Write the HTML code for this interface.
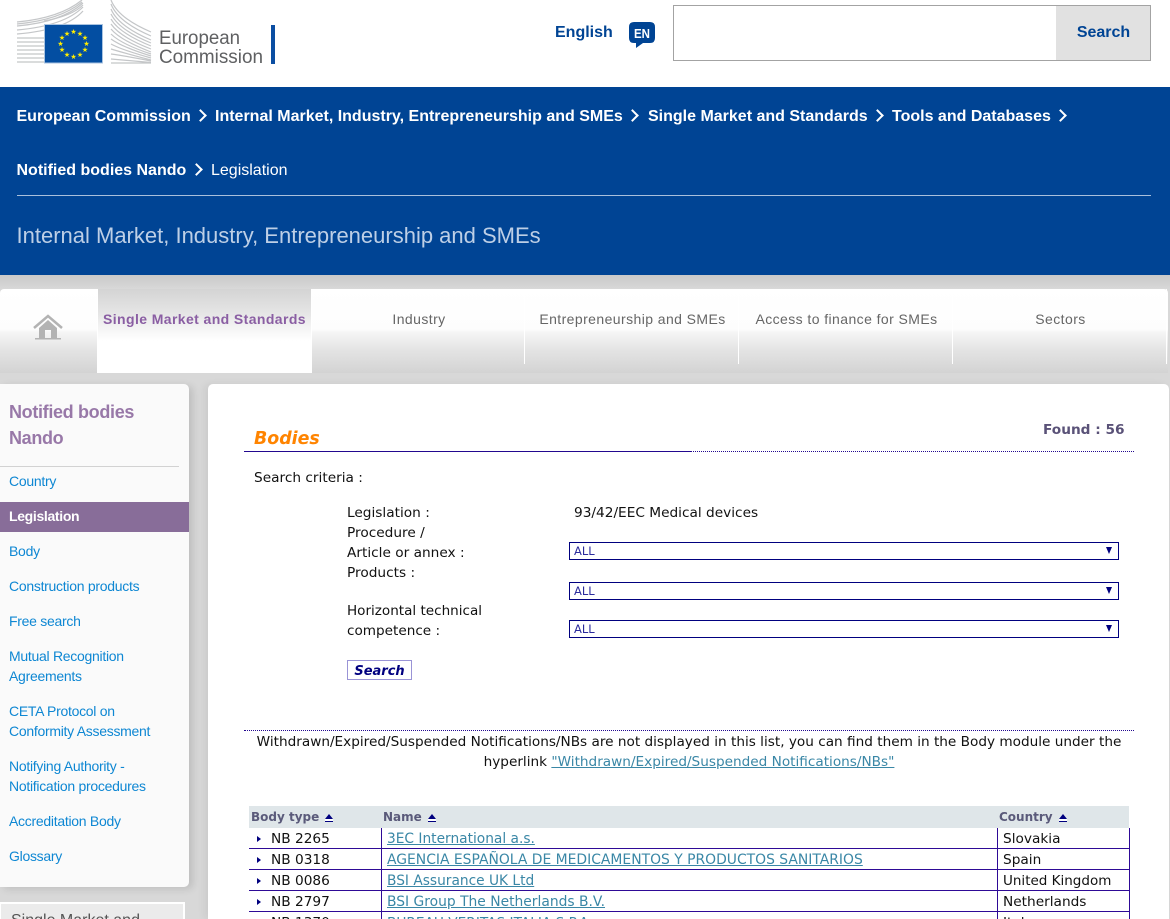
<!DOCTYPE html>
<html lang="en"><head><meta charset="utf-8"><title>Notified bodies Nando - Legislation</title>
<style>
html,body{margin:0;padding:0;width:1170px;height:919px;overflow:hidden}
#w{position:relative;width:1170px;height:919px;overflow:hidden;background:#d6d6d6;font-family:"Liberation Sans",Arial,sans-serif}
.a{position:absolute;white-space:nowrap}
#top{left:0;top:0;width:1170px;height:87px;background:#fff}
#blue{left:0;top:87px;width:1170px;height:188px;background:#004494}
.bc{color:#fff;font-size:16px;font-weight:bold;line-height:20px}
.chev{position:absolute;width:7px;height:7px;border-top:2px solid #fff;border-right:2px solid #fff;transform:rotate(45deg)}
#bg{left:0;top:275px;width:1170px;height:644px;background:linear-gradient(#c9c9c9 0,#d8d8d8 14px,#d8d8d8 100%)}
#nav{left:0;top:289px;width:1168px;height:84px;border-radius:4px 4px 0 0;background:linear-gradient(#fff 0,#fdfdfd 48%,#f6f6f6 51%,#e4e4e4 72%,#d3d3d3 100%)}
.tab{position:absolute;top:289px;height:75px;border-right:1px solid #fff;color:#666;font-size:14px;letter-spacing:.42px;line-height:60px;text-align:center;text-indent:2px}
#act{left:97px;top:289px;width:215px;height:84px;background:linear-gradient(#d4d4d4 0,#e6e6e6 30%,#f3f3f3 45%,#fff 62%,#fff 100%);color:#8a5ea3;font-weight:bold;font-size:14px;letter-spacing:.4px;line-height:60px;text-align:center;border-left:1px solid #fff;border-right:1px solid #fff;box-sizing:border-box}
#side{left:0;top:384px;width:189px;height:503px;background:#fafafa;border-radius:0 5px 5px 0;box-shadow:4px 2px 8px rgba(0,0,0,.12)}
.sl{position:absolute;left:9px;color:#0e87d3;font-size:14px;line-height:20px;letter-spacing:-.28px;white-space:nowrap}
#main{left:208px;top:384px;width:961px;height:535px;background:#fff;border-radius:5px 5px 0 0;box-shadow:-4px 0 8px rgba(0,0,0,.06)}
.v{position:absolute;white-space:nowrap;font-family:"DejaVu Sans",Verdana,sans-serif;font-size:13.7px;line-height:22px;color:#111}
.sel{position:absolute;left:569px;width:548px;height:16px;border:1px solid #00007f;background:#fff;box-sizing:content-box;font-family:"DejaVu Sans",sans-serif;font-size:11.5px;line-height:17px;color:#2b2b9c;text-indent:4px}
.sel i{position:absolute;right:6px;top:4px;width:0;height:0;border-left:3px solid transparent;border-right:3px solid transparent;border-top:7px solid #00007f}
.h{position:absolute;top:806px;height:22px;background:#dfe6e9}
.th{position:absolute;top:808px;font-family:"DejaVu Sans",sans-serif;font-size:12px;font-weight:bold;color:#5a5a7a;line-height:18px;white-space:nowrap}
.th b{display:inline-block;margin-left:6px;vertical-align:2px;width:0;height:0;border-left:4px solid transparent;border-right:4px solid transparent;border-bottom:5px solid #00007f;box-shadow:0 2px 0 #fff,0 3px 0 #00007f}
.hl{position:absolute;left:249px;width:881px;height:1px;background:#2e0a96}
.vl{position:absolute;top:828px;width:1px;height:91px;background:#2e0a96}
.ar{position:absolute;left:257px;width:0;height:0;border-top:3px solid transparent;border-bottom:3px solid transparent;border-left:4px solid #00007f}
.v a{color:#3a87a6;text-decoration:underline}
</style></head><body><div id="w">
<div class="a" id="top"></div>
<svg class="a" style="left:0;top:0" width="290" height="70" viewBox="0 0 290 70">
<g fill="none" stroke="#c4c6c8" stroke-width="1.2">
<path d="M17 22Q60 18 82 0M17 26Q62 22 83 3M17 30Q64 26 83 7M17 34Q66 30 83 11M17 38H44M17 42H44M17 46H44M17 50H44M17 54H44M17 58H44M17 62H44"/>
<path d="M17 24Q60 20 82 2M44 21Q72 16 83 5"/>
<path d="M111 0Q118 18 151 32M111 4Q118 22 151 36M111 9Q118 26 151 40M111 14Q119 30 151 43M111 19Q119 33 151 46M111 24Q120 37 151 49M111 29Q120 40 151 52M111 34Q121 44 151 54M111 39Q122 47 151 56M111 44Q122 50 151 58M111 49Q124 53 151 60M111 54Q126 56 151 61M111 59L151 62.5M111 63H151"/>
</g>
<rect x="44.500" y="24.500" width="58" height="38.500" fill="#034ea2" stroke="#a9c3e0"/>
<g fill="#ffed00" font-size="7" text-anchor="middle" font-family="DejaVu Sans,sans-serif">
<text x="73.500" y="34">★</text><text x="80" y="36">★</text><text x="85" y="40">★</text><text x="86.500" y="46">★</text><text x="85" y="52">★</text><text x="80" y="57">★</text><text x="73.500" y="59">★</text><text x="67" y="57">★</text><text x="62" y="52">★</text><text x="60.500" y="46">★</text><text x="62" y="40">★</text><text x="67" y="36">★</text>
</g>
<text x="159" y="44" font-family="Liberation Sans,sans-serif" font-size="19" fill="#5f6062" textLength="81" lengthAdjust="spacingAndGlyphs">European</text>
<text x="159" y="63" font-family="Liberation Sans,sans-serif" font-size="19" fill="#5f6062" textLength="104" lengthAdjust="spacingAndGlyphs">Commission</text>
<rect x="271" y="25" width="4" height="39" fill="#0b4ea2"/>
</svg>
<div class="a" style="left:555px;top:23px;color:#004494;font-size:16px;font-weight:bold;line-height:20px">English</div>
<svg class="a" style="left:628px;top:21px" width="28" height="28" viewBox="0 0 28 28"><path d="M6 1H22Q27 1 27 6V17Q27 22 22 22H15L8 27V22H6Q1 22 1 17V6Q1 1 6 1Z" fill="#004494"/><text x="14" y="17" text-anchor="middle" font-family="Liberation Sans,sans-serif" font-weight="bold" font-size="12.500" fill="#fff" textLength="16" lengthAdjust="spacingAndGlyphs">EN</text></svg>
<div class="a" style="left:673px;top:5px;width:476px;height:54px;border:1px solid #a3a3a3;background:#fff"></div>
<div class="a" style="left:1056px;top:6px;width:94px;height:54px;background:#e1e1e1;color:#004494;font-size:16px;font-weight:bold;line-height:54px;text-align:center;text-indent:1px">Search</div>

<div class="a" id="blue"></div>
<div class="a bc" style="left:16.500px;top:107px">European Commission</div><i class="chev" style="left:196px;top:111px"></i>
<div class="a bc" style="left:215px;top:107px">Internal Market, Industry, Entrepreneurship and SMEs</div><i class="chev" style="left:628px;top:111px"></i>
<div class="a bc" style="left:648px;top:107px">Single Market and Standards</div><i class="chev" style="left:873px;top:111px"></i>
<div class="a bc" style="left:892px;top:107px">Tools and Databases</div><i class="chev" style="left:1056px;top:111px"></i>
<div class="a bc" style="left:16.500px;top:161px">Notified bodies Nando</div><i class="chev" style="left:192px;top:165px"></i>
<div class="a bc" style="left:211px;top:161px;font-weight:normal">Legislation</div>
<div class="a" style="left:17px;top:195px;width:1134px;height:1px;background:#a9c0dc"></div>
<div class="a" style="left:16.500px;top:222px;color:#bdcfe6;font-size:22px;line-height:28px">Internal Market, Industry, Entrepreneurship and SMEs</div>

<div class="a" id="bg"></div>
<div class="a" id="nav"></div>
<svg class="a" style="left:33px;top:314px" width="30" height="26" viewBox="0 0 30 26"><path d="M1 14L15 2L29 14" fill="none" stroke="#b3b3b3" stroke-width="2.500"/><path d="M6 14L15 6L24 14V24H18V16H12V24H6Z" fill="#b3b3b3"/><rect x="2" y="24" width="26" height="1.500" fill="#b3b3b3"/></svg>
<div class="a" id="act">Single Market and Standards</div>
<div class="a tab" style="left:312px;width:212px">Industry</div>
<div class="a tab" style="left:525px;width:213px">Entrepreneurship and SMEs</div>
<div class="a tab" style="left:739px;width:213px">Access to finance for SMEs</div>
<div class="a tab" style="left:953px;width:213px">Sectors</div>

<div class="a" id="side"></div>
<div class="a" style="left:9px;top:399px;color:#9878a8;font-size:18px;font-weight:bold;line-height:26px;letter-spacing:-.33px">Notified bodies<br>Nando</div>
<div class="a" style="left:0;top:466px;width:179px;height:1px;background:#d2d2d2"></div>
<div class="sl" style="top:471px">Country</div>
<div class="a" style="left:0;top:502px;width:189px;height:30px;background:#886d99;color:#fff;font-size:14px;font-weight:bold;line-height:29px;text-indent:9px;letter-spacing:-.33px">Legislation</div>
<div class="sl" style="top:541px">Body</div>
<div class="sl" style="top:576px">Construction products</div>
<div class="sl" style="top:611px">Free search</div>
<div class="sl" style="top:646px">Mutual Recognition<br>Agreements</div>
<div class="sl" style="top:701px">CETA Protocol on<br>Conformity Assessment</div>
<div class="sl" style="top:756px">Notifying Authority -<br>Notification procedures</div>
<div class="sl" style="top:811px">Accreditation Body</div>
<div class="sl" style="top:846px">Glossary</div>
<div class="a" style="left:0;top:902px;width:185px;height:17px;background:#fff"></div>
<div class="a" style="left:1px;top:904px;width:182px;height:15px;background:#ebebeb"></div>
<div class="a" style="left:11px;top:911px;color:#555;font-size:16px;line-height:20px">Single Market and</div>

<div class="a" id="main"></div>
<div class="v" style="left:254px;top:428px;font-size:17.400px;font-weight:bold;font-style:italic;color:#ff8400;line-height:22px">Bodies</div>
<div class="v" style="left:1043px;top:419px;font-weight:bold;color:#5a5278">Found : 56</div>
<div class="a" style="left:244px;top:451px;width:446px;height:1px;background:#22088f"></div>
<div class="a" style="left:690px;top:451px;width:444px;border-top:1px dotted #22088f"></div>
<div class="v" style="left:254px;top:467px">Search criteria :</div>
<div class="v" style="left:347px;top:502px">Legislation :</div>
<div class="v" style="left:574px;top:502px">93/42/EEC Medical devices</div>
<div class="v" style="left:347px;top:522px">Procedure /</div>
<div class="v" style="left:347px;top:542px">Article or annex :</div>
<div class="v" style="left:347px;top:562px">Products :</div>
<div class="v" style="left:347px;top:600px;font-size:13.550px">Horizontal technical</div>
<div class="v" style="left:347px;top:620px;font-size:13.600px">competence :</div>
<div class="sel" style="top:542px">ALL<i></i></div>
<div class="sel" style="top:582px">ALL<i></i></div>
<div class="sel" style="top:620px">ALL<i></i></div>
<div class="a" style="left:347px;top:660px;width:63px;height:18px;border:1px solid #9a94d6;background:#fff;color:#00007f;font-family:'DejaVu Sans',sans-serif;font-size:13px;font-weight:bold;font-style:italic;line-height:21px;text-align:center">Search</div>
<div class="a" style="left:244px;top:730px;width:890px;border-top:1px dotted #22088f"></div>
<div class="v" style="left:244px;top:731px;width:890px;text-align:center;font-size:13.640px">Withdrawn/Expired/Suspended Notifications/NBs are not displayed in this list, you can find them in the Body module under the</div>
<div class="v" style="left:244px;top:751px;width:890px;text-align:center;font-size:13.640px">hyperlink <a>"Withdrawn/Expired/Suspended Notifications/NBs"</a></div>

<div class="h" style="left:249px;width:880px"></div>
<div class="th" style="left:251px">Body type<b></b></div>
<div class="th" style="left:383px">Name<b></b></div>
<div class="th" style="left:999px">Country<b></b></div>
<div class="vl" style="left:381px"></div><div class="vl" style="left:997px"></div><div class="vl" style="left:1129px"></div>
<div class="hl" style="top:848px"></div><div class="hl" style="top:869px"></div><div class="hl" style="top:890px"></div><div class="hl" style="top:911px"></div>
<i class="ar" style="top:836px"></i><div class="v" style="left:271px;top:828px">NB 2265</div><div class="v" style="left:387px;top:828px;font-size:13.750px"><a>3EC International a.s.</a></div><div class="v" style="left:1003px;top:828px">Slovakia</div>
<i class="ar" style="top:857px"></i><div class="v" style="left:271px;top:849px">NB 0318</div><div class="v" style="left:387px;top:849px;font-size:13.900px"><a>AGENCIA ESPAÑOLA DE MEDICAMENTOS Y PRODUCTOS SANITARIOS</a></div><div class="v" style="left:1003px;top:849px">Spain</div>
<i class="ar" style="top:878px"></i><div class="v" style="left:271px;top:870px">NB 0086</div><div class="v" style="left:387px;top:870px;font-size:13.750px"><a>BSI Assurance UK Ltd</a></div><div class="v" style="left:1003px;top:870px;font-size:13.500px">United Kingdom</div>
<i class="ar" style="top:899px"></i><div class="v" style="left:271px;top:891px">NB 2797</div><div class="v" style="left:387px;top:891px;font-size:13.850px"><a>BSI Group The Netherlands B.V.</a></div><div class="v" style="left:1003px;top:891px">Netherlands</div>
<div class="v" style="left:271px;top:912px">NB 1370</div><div class="v" style="left:387px;top:912px"><a>BUREAU VERITAS ITALIA S.P.A.</a></div><div class="v" style="left:1003px;top:912px">Italy</div>
</div></body></html>
